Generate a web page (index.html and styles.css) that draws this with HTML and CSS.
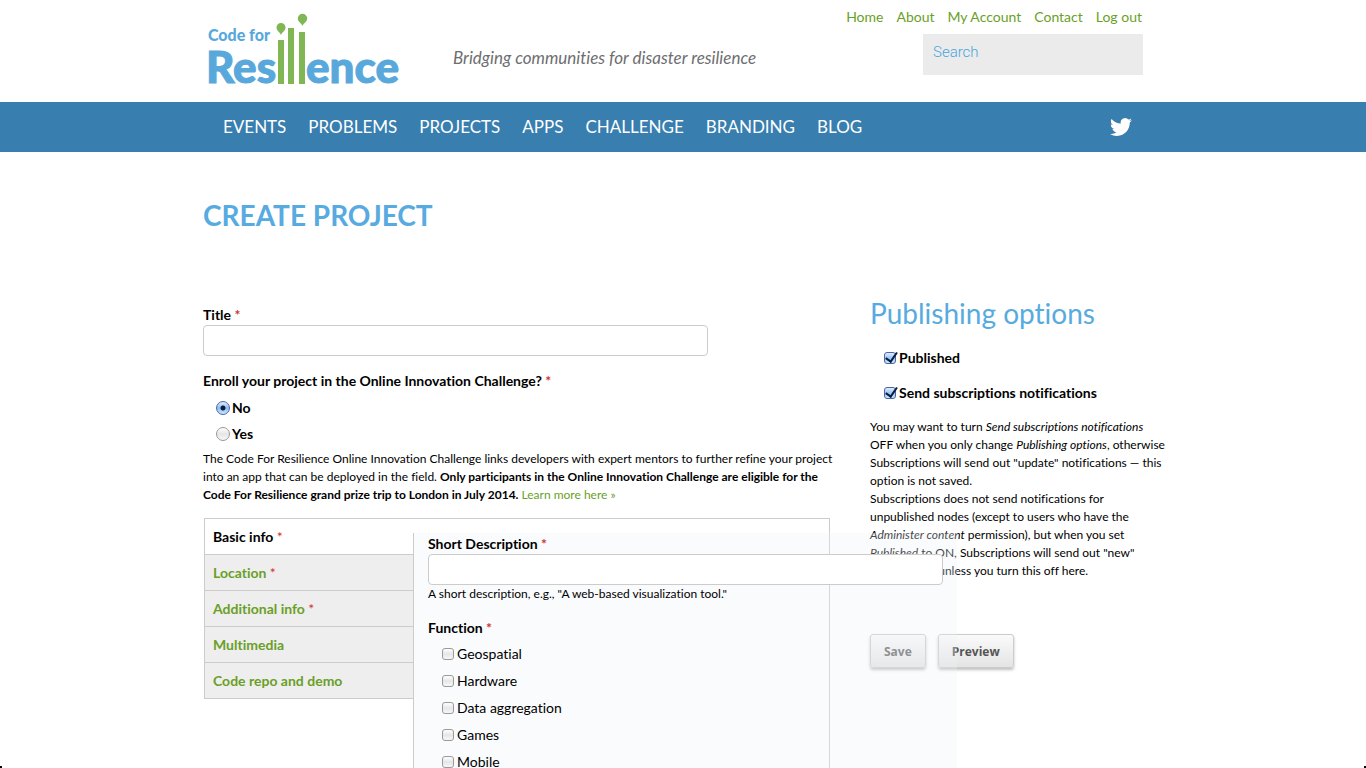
FILE: index.html
```html
<!DOCTYPE html>
<html lang="en">
<head>
<meta charset="utf-8">
<title>Create Project | Code for Resilience</title>
<link rel="stylesheet" href="styles.css">
</head>
<body>
<header class="wrap header">
  <a class="logo" href="#" aria-label="Code for Resilience home">
    <svg width="192" height="76" viewBox="0 0 192 76">
      <g class="logo-text">
        <text x="1" y="29" class="logo-small">Code for</text>
        <text x="-1" y="71" class="logo-big">Res</text>
        <text x="99" y="71" class="logo-big">ence</text>
      </g>
      <g fill="#80b654">
        <path d="M71 28h6v44h-6zM81 16h6v56h-6zM92 20h6v52h-6z"/>
        <path d="M74 23c-1-3-4.500-4-4.500-7.500a4.500 4.500 0 0 1 9 0c0 3.500-3.500 4.500-4.500 7.500zM95.500 14c-1-3-4.700-4-4.700-7.500a4.700 4.700 0 0 1 9.400 0c0 3.500-3.700 4.500-4.700 7.500z"/>
      </g>
    </svg>
  </a>
  <p class="slogan">Bridging communities for disaster resilience</p>
  <div class="header-side">
    <nav class="user-menu" aria-label="User">
      <a href="#">Home</a><a href="#">About</a><a href="#">My Account</a><a href="#">Contact</a><a href="#">Log out</a>
    </nav>
    <input class="search" type="text" placeholder="Search" aria-label="Search">
  </div>
</header>

<div class="navbar">
  <div class="wrap navbar-inner">
    <nav class="main-menu" aria-label="Main">
      <a href="#">EVENTS</a><a href="#">PROBLEMS</a><a href="#">PROJECTS</a><a href="#">APPS</a><a href="#">CHALLENGE</a><a href="#">BRANDING</a><a href="#">BLOG</a>
    </nav>
    <a class="twitter" href="#" aria-label="Twitter">
      <svg width="22" height="22" viewBox="0 0 24 24"><path fill="#fff" d="M23.950 4.570a10 10 0 0 1-2.820.770 4.960 4.960 0 0 0 2.160-2.720c-.950.550-2 .950-3.130 1.180a4.920 4.920 0 0 0-8.380 4.480C7.690 8.100 4.070 6.130 1.640 3.160a4.820 4.820 0 0 0-.670 2.480c0 1.710.870 3.210 2.190 4.100a4.900 4.900 0 0 1-2.230-.620v.060a4.920 4.920 0 0 0 3.950 4.830 5 5 0 0 1-2.210.080 4.940 4.940 0 0 0 4.600 3.420A9.870 9.870 0 0 1 0 19.540a13.990 13.990 0 0 0 7.550 2.210c9.050 0 14-7.500 14-13.980 0-.210 0-.420-.020-.630a9.940 9.940 0 0 0 2.460-2.550z"/></svg>
    </a>
  </div>
</div>

<main class="wrap">
  <h1>CREATE PROJECT</h1>
  <form class="columns">
    <div class="primary">
      <label class="field-label" for="title">Title <span class="req">*</span></label>
      <input class="text-input" id="title" type="text">

      <fieldset class="enroll">
        <legend class="field-label">Enroll your project in the Online Innovation Challenge? <span class="req">*</span></legend>
        <label class="option strong"><input class="radio" type="radio" name="enroll" checked>No</label>
        <label class="option strong"><input class="radio" type="radio" name="enroll">Yes</label>
      </fieldset>
      <p class="help enroll-help">The Code For Resilience Online Innovation Challenge links developers with expert mentors to further refine your project<br>into an app that can be deployed in the field. <strong>Only participants in the Online Innovation Challenge are eligible for the<br>Code For Resilience grand prize trip to London in July 2014.</strong> <a href="#">Learn more here »</a></p>

      <div class="tabs">
        <ul class="tab-list">
          <li class="active"><a href="#">Basic info <span class="req">*</span></a></li>
          <li><a href="#">Location <span class="req">*</span></a></li>
          <li><a href="#">Additional info <span class="req">*</span></a></li>
          <li><a href="#">Multimedia</a></li>
          <li><a href="#">Code repo and demo</a></li>
        </ul>
        <div class="pane">
          <label class="field-label" for="short">Short Description <span class="req">*</span></label>
          <input class="text-input" id="short" type="text">
          <p class="help">A short description, e.g., "A web-based visualization tool."</p>
          <fieldset class="function">
            <legend class="field-label">Function <span class="req">*</span></legend>
            <label class="option"><input class="check" type="checkbox">Geospatial</label>
            <label class="option"><input class="check" type="checkbox">Hardware</label>
            <label class="option"><input class="check" type="checkbox">Data aggregation</label>
            <label class="option"><input class="check" type="checkbox">Games</label>
            <label class="option"><input class="check" type="checkbox">Mobile</label>
          </fieldset>
        </div>
      </div>
    </div>

    <aside class="secondary">
      <h2>Publishing options</h2>
      <label class="option strong publish"><input class="check" type="checkbox" checked>Published</label>
      <label class="option strong publish"><input class="check" type="checkbox" checked>Send subscriptions notifications</label>
      <p class="help">You may want to turn <em>Send subscriptions notifications</em><br>OFF when you only change <em>Publishing options</em>, otherwise<br>Subscriptions will send out "update" notifications — this<br>option is not saved.<br>Subscriptions does not send notifications for<br>unpublished nodes (except to users who have the<br><em>Administer content</em> permission), but when you set<br><em>Published</em> to ON, Subscriptions will send out "new"<br>notifications unless you turn this off here.</p>
      <div class="actions">
        <button class="btn btn-muted" type="button">Save</button>
        <button class="btn" type="button">Preview</button>
      </div>
    </aside>
  </form>
</main>
</body>
</html>
```
FILE: styles.css
```css
* { box-sizing: border-box; }
html { scrollbar-width: none; }
body {
  margin: 0;
  background: #fff;
  color: #000;
  font: 14px/18px Lato, sans-serif;
  font-variant-ligatures: none;
}
body::before, body::after {
  content: "";
  position: fixed;
  bottom: 0;
  width: 2px;
  height: 2px;
  background: #000;
}
body::before { left: 0; }
body::after { right: 0; }
a { color: #6a9f27; text-decoration: none; }
p, h1, h2, ul, fieldset { margin: 0; padding: 0; }
fieldset { border: 0; min-width: 0; }
.wrap { max-width: 960px; margin: 0 auto; }

.header { display: flex; height: 102px; padding-right: 20px; }
.logo { margin: 12px 0 0 4px; width: 192px; }
.logo svg { display: block; overflow: visible; }
.logo-text { fill: #58a8dc; font-family: Lato, sans-serif; font-weight: 900; }
.logo-small { font-size: 16px; }
.logo-big { font-size: 44px; stroke: #58a8dc; stroke-width: 1px; }
.slogan { margin: 46px 0 0 54px; color: #6d6e70; font-size: 17px; line-height: 24px; font-style: italic; }
.header-side { margin-left: auto; display: flex; flex-direction: column; align-items: flex-end; }
.user-menu { display: flex; gap: 13px; padding: 8px 1px 8px 0; }
.search {
  width: 220px;
  height: 41px;
  padding: 0 10px 6px;
  border: 0;
  background: #ebebeb;
  font: 300 15px Roboto, sans-serif;
}
.search::placeholder { color: #4aa5dc; opacity: 1; }

.navbar { background: #387eaf; }
.navbar-inner { display: flex; align-items: center; justify-content: space-between; height: 50px; padding: 0 31px 0 20px; }
.main-menu { display: flex; gap: 22px; font-size: 17px; }
.main-menu a { color: #fff; }
.twitter svg { display: block; }

h1 { padding: 45px 0 0; color: #57abe0; font-size: 28px; line-height: 36px; }
.columns { display: flex; gap: 40px; padding-top: 61px; }
.primary { flex: 0 0 627px; min-width: 0; padding-top: 11px; }
.secondary { flex: 1; min-width: 0; }

.field-label { display: block; padding: 0; font-weight: bold; line-height: 20px; }
.req { color: #c33; font-weight: normal; }
.field-label .req { font-weight: bold; }
.text-input {
  display: block;
  width: 505px;
  height: 31px;
  padding: 4px 8px;
  border: 1px solid #ccc;
  border-radius: 4px;
  background: #fff;
  font: inherit;
}
.enroll { margin-top: 15px; }
.option { display: flex; align-items: center; height: 27px; padding-left: 14px; gap: 3px; }
.strong { font-weight: bold; }
.enroll .option { padding-left: 13px; gap: 2px; height: 26px; }
.enroll .field-label { margin-bottom: 4px; }
.help { font-size: 12px; line-height: 18px; white-space: nowrap; }
.enroll-help { margin-top: 3px; }

.radio, .check { appearance: none; margin: 0; border: 1px solid #999; background: linear-gradient(#fff, #e6e6e6 50%, #f8f8f8); }
.radio { width: 14px; height: 14px; border-radius: 50%; }
.radio:checked { border-color: #5063a5; background: radial-gradient(circle, #0b1d3c 2px, transparent 3px), linear-gradient(#e0edff, #8ebcf0 50%, #c4eaff); }
.check { position: relative; width: 12px; height: 12px; border-radius: 3px; }
.check:checked { border-color: #5063a5; background: linear-gradient(#e0edff, #9cc6f4 50%, #c4eaff); }
.check:checked::after {
  content: "";
  position: absolute;
  left: 4px;
  top: -3px;
  width: 5px;
  height: 10px;
  border: solid #0b1d3c;
  border-width: 0 2px 2px 0;
  transform: rotate(35deg);
}

.tabs { display: flex; margin: 14px 0 0 1px; border: solid #ccc; border-width: 1px 1px 1px 0; }
.tab-list { flex: 0 0 210px; list-style: none; align-self: flex-start; border-left: 1px solid #ccc; font-weight: bold; }
.tab-list li { height: 36px; padding: 9px 8px; border: solid #ccc; border-width: 0 1px 1px 0; background: #eee; }
.tab-list .active { background: #fff; border-right-color: #fff; }
.active a { color: #000; }
.pane {
  position: relative;
  flex: 0 0 544px;
  margin-top: 14px;
  margin-left: -1px;
  margin-right: -200px;
  padding: 1px 14px 24px;
  border-left: 1px solid #ccc;
  background: rgba(237, 243, 250, .3);
}
.pane .text-input { width: 515px; }
.function { margin-top: 15px; }
.function .field-label { margin-bottom: 2px; }

h2 { color: #57abe0; font-size: 28px; font-weight: normal; line-height: 38px; }
.publish { height: 35px; }
h2 + .publish { margin-top: 8px; }
.publish .check:checked::after { left: 3px; }
.secondary .help { margin-top: 8px; }
.actions { display: flex; gap: 12px; margin-top: 54px; }
.btn {
  height: 34px;
  padding: 0 13px;
  border: 1px solid #ccc;
  border-radius: 3px;
  background: linear-gradient(#fafafa, #e4e4e4);
  box-shadow: 0 2px 3px rgba(0, 0, 0, .25);
  color: #555;
  font: bold 12px "Open Sans", sans-serif;
}
.btn-muted { color: #666; }
```
